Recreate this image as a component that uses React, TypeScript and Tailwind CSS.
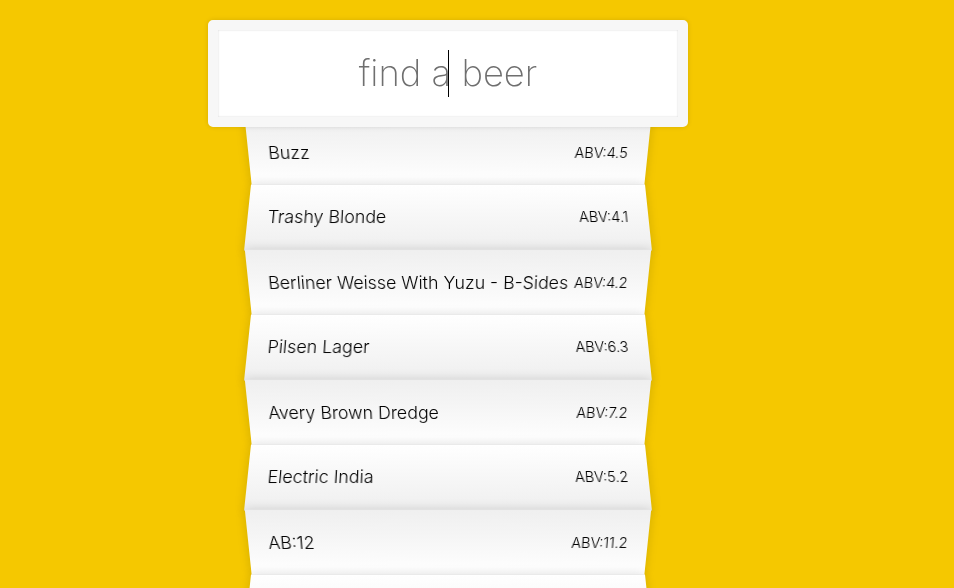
import React from 'react';

const beers = [
  { name: 'Buzz', abv: '4.5' },
  { name: 'Trashy Blonde', abv: '4.1' },
  { name: 'Berliner Weisse With Yuzu - B-Sides', abv: '4.2' },
  { name: 'Pilsen Lager', abv: '6.3' },
  { name: 'Avery Brown Dredge', abv: '7.2' },
  { name: 'Electric India', abv: '5.2' },
  { name: 'AB:12', abv: '11.2' },
  { name: 'Fake Lager', abv: '4.7' },
];

const font = "font-['Helvetica_Neue',Inter,'Liberation_Sans',sans-serif]";

const App: React.FC = () => {
  return (
    <div className={`h-screen overflow-hidden bg-[#f5c800] ${font} font-light text-[17.8px]`}>
      <form className="ml-[208px] w-[480px] pt-[20px]">
        {/* Search box */}
        <div className="relative z-10 -mb-[10px] rounded-[5px] border-[10px] border-[#F7F7F7] bg-white p-[20px] text-center text-[36.4px] font-extralight leading-[47px] text-[#6f6f6f] shadow-[0_0_5px_rgba(0,0,0,0.12),inset_0_0_2px_rgba(0,0,0,0.19)]">
          <span>find a beer</span>
          <span className="absolute left-1/2 top-[20px] h-[47px] w-px bg-black" />
        </div>

        {/* Suggestions */}
        <ul className="mx-[40px]">
          {beers.map((beer, i) => (
            <li
              key={beer.name}
              className={
                '-mb-px flex justify-between gap-1.5 whitespace-nowrap border-b border-[#D8D8D8] p-[20px] leading-[25px] text-black shadow-[0_0_10px_rgba(0,0,0,0.14)] ' +
                (i % 2 === 0
                  ? '[transform:perspective(100px)_rotateX(-3deg)_translateY(3px)] bg-[linear-gradient(to_top,#ffffff_0%,#EFEFEF_100%)]'
                  : '[transform:perspective(100px)_rotateX(3deg)_translateY(2px)_scale(1.001)] bg-[linear-gradient(to_bottom,#ffffff_0%,#EFEFEF_100%)]')
              }
            >
              <span className="min-w-0">{beer.name}</span>
              <span className="shrink-0 text-[14.5px]">ABV:{beer.abv}</span>
            </li>
          ))}
        </ul>
      </form>
    </div>
  );
};

export default App;
